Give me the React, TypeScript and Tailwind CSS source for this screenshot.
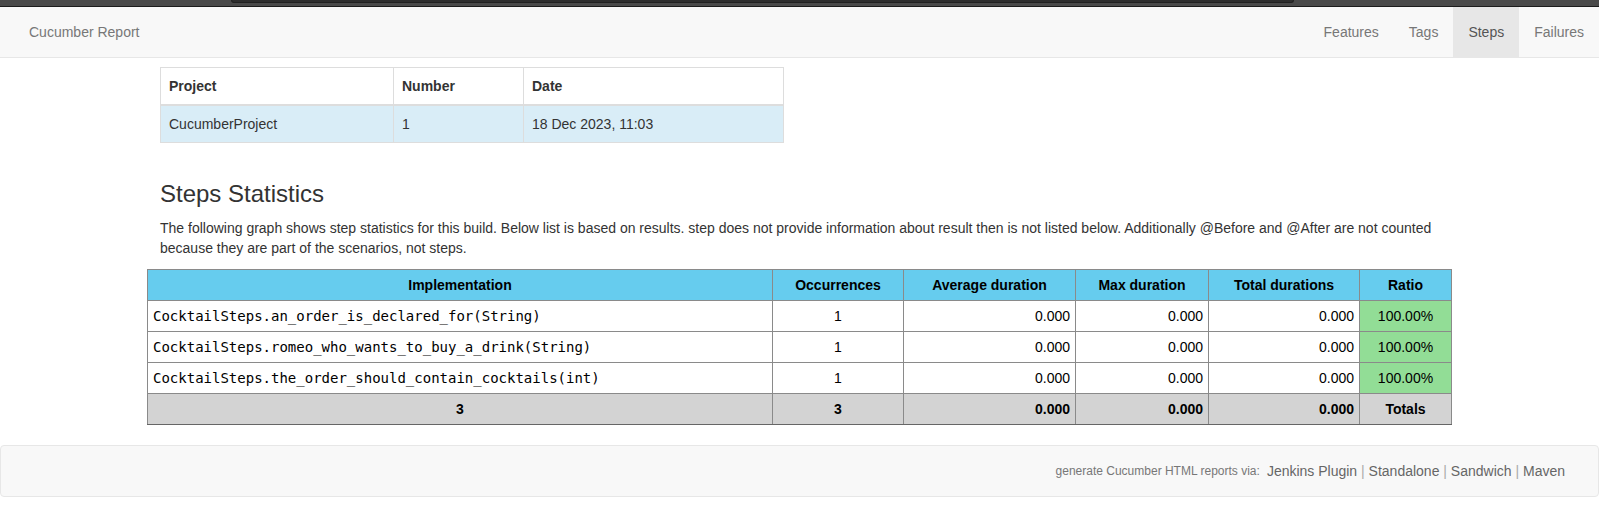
const steps = [
  "CocktailSteps.an_order_is_declared_for(String)",
  "CocktailSteps.romeo_who_wants_to_buy_a_drink(String)",
  "CocktailSteps.the_order_should_contain_cocktails(int)",
];

const navItems = ["Features", "Tags", "Steps", "Failures"];

function TopBar() {
  return (
    <div className="h-[7px] bg-[#4a4a4a] border-b border-[#1c1c1c]">
      <div className="ml-[231px] w-[1063px] h-[3px] bg-[#2e2e2e] border-x border-b border-[#222] rounded-b-[3px]" />
    </div>
  );
}

function Navbar() {
  return (
    <nav className="flex h-[51px] items-center justify-between bg-[#f8f8f8] border-b border-[#e7e7e7]">
      <span className="pl-[29px] text-[14px] text-[#777]">Cucumber Report</span>
      <ul className="flex h-full">
        {navItems.map((item) => (
          <li
            key={item}
            className={
              item === "Steps"
                ? "flex items-center px-[15px] bg-[#e7e7e7] text-[#555] text-[14px]"
                : "flex items-center px-[15px] text-[#777] text-[14px]"
            }
          >
            {item}
          </li>
        ))}
      </ul>
    </nav>
  );
}

function BuildTable() {
  return (
    <table className="border-collapse text-[14px] leading-[20px] text-[#333]">
      <thead>
        <tr>
          <th className="w-[233px] border border-[#ddd] border-b-2 px-[8px] py-[8px] text-left font-bold">Project</th>
          <th className="w-[130px] border border-[#ddd] border-b-2 px-[8px] py-[8px] text-left font-bold">Number</th>
          <th className="w-[260px] border border-[#ddd] border-b-2 px-[8px] py-[8px] text-left font-bold">Date</th>
        </tr>
      </thead>
      <tbody>
        <tr className="bg-[#d9edf7]">
          <td className="border border-[#ddd] px-[8px] py-[8px]">CucumberProject</td>
          <td className="border border-[#ddd] px-[8px] py-[8px]">1</td>
          <td className="border border-[#ddd] px-[8px] py-[8px]">18 Dec 2023, 11:03</td>
        </tr>
      </tbody>
    </table>
  );
}

function StatsTable() {
  const th = "border border-[#8a8a8a] px-[5px] py-[5px] text-center font-bold";
  const td = "border border-[#8a8a8a] px-[5px] py-[5px]";
  return (
    <table className="w-full table-fixed border-collapse text-[14px] leading-[20px] text-black">
      <thead>
        <tr className="bg-[#66ccee]">
          <th className={`${th} w-[625px]`}>Implementation</th>
          <th className={`${th} w-[131px]`}>Occurrences</th>
          <th className={`${th} w-[172px]`}>Average duration</th>
          <th className={`${th} w-[133px]`}>Max duration</th>
          <th className={`${th} w-[151px]`}>Total durations</th>
          <th className={th}>Ratio</th>
        </tr>
      </thead>
      <tbody>
        {steps.map((s) => (
          <tr key={s}>
            <td className={`${td} font-['DejaVu_Sans_Mono',monospace] text-[14px]`}>{s}</td>
            <td className={`${td} text-center`}>1</td>
            <td className={`${td} text-right`}>0.000</td>
            <td className={`${td} text-right`}>0.000</td>
            <td className={`${td} text-right`}>0.000</td>
            <td className={`${td} text-center bg-[#92dd96]`}>100.00%</td>
          </tr>
        ))}
        <tr className="bg-[#d3d3d3] font-bold">
          <td className={`${td} text-center border-b-[#666]`}>3</td>
          <td className={`${td} text-center border-b-[#666]`}>3</td>
          <td className={`${td} text-right border-b-[#666]`}>0.000</td>
          <td className={`${td} text-right border-b-[#666]`}>0.000</td>
          <td className={`${td} text-right border-b-[#666]`}>0.000</td>
          <td className={`${td} text-center border-b-[#666]`}>Totals</td>
        </tr>
      </tbody>
    </table>
  );
}

function Footer() {
  const links = ["Jenkins Plugin", "Standalone", "Sandwich", "Maven"];
  return (
    <footer className="mt-[20px] flex h-[52px] items-center justify-end rounded-[4px] border border-[#e7e7e7] bg-[#f8f8f8] pr-[33px]">
      <span className="text-[12px] text-[#777]">generate Cucumber HTML reports via:</span>
      <span className="ml-[7px] text-[14px] text-[#666]">
        {links.map((l, i) => (
          <span key={l}>
            {i > 0 && <span className="text-[#aaa]"> | </span>}
            {l}
          </span>
        ))}
      </span>
    </footer>
  );
}

export default function App() {
  return (
    <div className="min-h-[506px] bg-white font-['Liberation_Sans',Arial,sans-serif]">
      <TopBar />
      <Navbar />
      <main className="px-[147px] pt-[9px]">
        <div className="px-[13px]">
          <BuildTable />
          <h3 className="mt-[38px] text-[24px] leading-[26px] text-[#333]">Steps Statistics</h3>
          <p className="mt-[11px] mb-[11px] text-[14px] leading-[20px] text-[#333]">
            The following graph shows step statistics for this build. Below list is based on results. step does not
            provide information about result then is not listed below. Additionally @Before and @After are not counted
            because they are part of the scenarios, not steps.
          </p>
        </div>
        <StatsTable />
      </main>
      <Footer />
    </div>
  );
}
